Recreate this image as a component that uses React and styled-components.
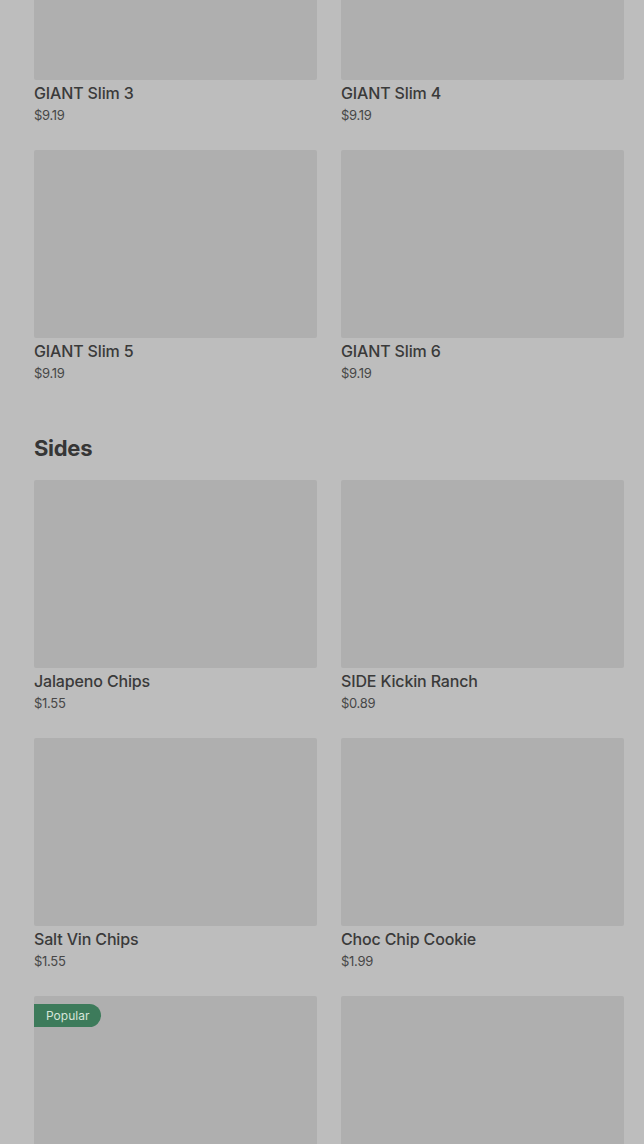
import React from "react";
import styled, { createGlobalStyle } from "styled-components";

const Global = createGlobalStyle`
  html, body { margin: 0; padding: 0; background: #bdbdbd; }
  body { font-family: Inter, "Noto Sans", "Liberation Sans", sans-serif; overflow: hidden; }
`;

const Page = styled.div`
  margin-top: -108px;
  padding: 0 20px 0 34px;
`;

const Section = styled.section`
  & + & { margin-top: 50px; }
`;

const Heading = styled.h2`
  margin: 0 0 18px;
  font-size: 22px;
  line-height: 28px;
  font-weight: 700;
  color: #363636;
  letter-spacing: -0.3px;
`;

const Grid = styled.div`
  display: grid;
  grid-template-columns: 1fr 1fr;
  column-gap: 24px;
  row-gap: 24px;
`;

const Card = styled.div`
  display: flex;
  flex-direction: column;
`;

const Thumb = styled.div`
  position: relative;
  height: 188px;
  background: #afafaf;
  border-radius: 2px;
`;

const Badge = styled.span`
  position: absolute;
  top: 8px;
  left: 0;
  height: 23px;
  padding: 0 12px;
  display: flex;
  align-items: center;
  background: #3d7b5b;
  color: #d6e5da;
  font-size: 12px;
  border-radius: 0 12px 12px 0;
`;

const Title = styled.div`
  margin-top: 1px;
  font-size: 16px;
  line-height: 24px;
  font-weight: 500;
  color: #3a3a3a;
  letter-spacing: -0.15px;
`;

const Price = styled.div`
  font-size: 13px;
  line-height: 21px;
  color: #474747;
  letter-spacing: -0.3px;
`;

const sections = [
  {
    name: null,
    items: [
      { title: "GIANT Slim 3", price: "$9.19" },
      { title: "GIANT Slim 4", price: "$9.19" },
      { title: "GIANT Slim 5", price: "$9.19" },
      { title: "GIANT Slim 6", price: "$9.19" },
    ],
  },
  {
    name: "Sides",
    items: [
      { title: "Jalapeno Chips", price: "$1.55" },
      { title: "SIDE Kickin Ranch", price: "$0.89" },
      { title: "Salt Vin Chips", price: "$1.55" },
      { title: "Choc Chip Cookie", price: "$1.99" },
      { title: "", price: "", popular: true },
      { title: "", price: "" },
    ],
  },
];

export default function App() {
  return (
    <>
      <Global />
      <Page>
        {sections.map((s, i) => (
          <Section key={i}>
            {s.name && <Heading>{s.name}</Heading>}
            <Grid>
              {s.items.map((it, j) => (
                <Card key={j}>
                  <Thumb>{it.popular && <Badge>Popular</Badge>}</Thumb>
                  {it.title && <Title>{it.title}</Title>}
                  {it.price && <Price>{it.price}</Price>}
                </Card>
              ))}
            </Grid>
          </Section>
        ))}
      </Page>
    </>
  );
}
